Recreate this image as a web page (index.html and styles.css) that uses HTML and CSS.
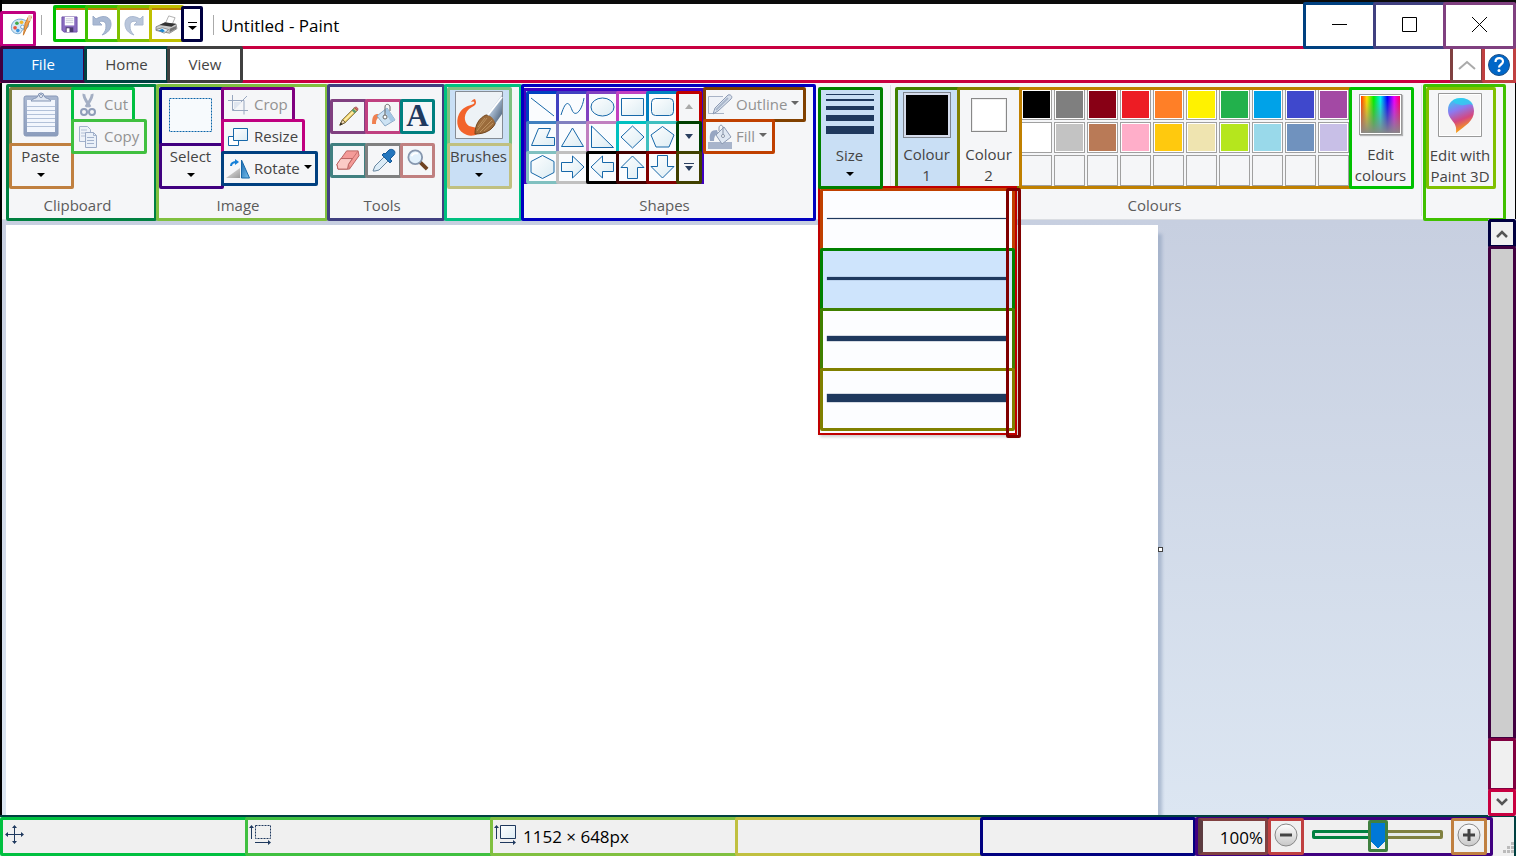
FILE: index.html
```html
<!DOCTYPE html>
<html lang="en-GB">
<head>
<meta charset="utf-8">
<title>Untitled - Paint</title>
<link rel="stylesheet" href="styles.css">
</head>
<body>
<svg class="defs" width="0" height="0" aria-hidden="true">
  <defs>
    <linearGradient id="pale" x1="0" y1="0" x2="1" y2="1"><stop offset="0" stop-color="#fff"/><stop offset="1" stop-color="#dcecf3"/></linearGradient>
    <linearGradient id="board" x1="0" y1="0" x2="0" y2="1"><stop offset="0" stop-color="#a9b7d0"/><stop offset="1" stop-color="#8c9dbd"/></linearGradient>
    <linearGradient id="grey" x1="0" y1="0" x2="1" y2="1"><stop offset="0" stop-color="#eee"/><stop offset="1" stop-color="#999"/></linearGradient>
    <linearGradient id="blue" x1="0" y1="0" x2="1" y2="1"><stop offset="0" stop-color="#1668b0"/><stop offset="1" stop-color="#7cc2ee"/></linearGradient>
    <linearGradient id="steel" x1="0" y1="0" x2="1" y2="1"><stop offset="0" stop-color="#e9f1f8"/><stop offset=".5" stop-color="#9fb2c8"/><stop offset="1" stop-color="#3c5068"/></linearGradient>
    <linearGradient id="drop" x1=".2" y1="0" x2=".5" y2="1"><stop offset="0" stop-color="#2fd0f2"/><stop offset=".35" stop-color="#8b7af0"/><stop offset=".65" stop-color="#d5477f"/><stop offset="1" stop-color="#ffb400"/></linearGradient>
    <linearGradient id="round" x1="0" y1="0" x2="0" y2="1"><stop offset="0" stop-color="#fff"/><stop offset="1" stop-color="#c8c8c8"/></linearGradient>
  </defs>
</svg>

<header class="titlebar">
  <button class="box app-icon" aria-label="Paint">
    <svg width="23" height="22" viewBox="0 0 24 24"><path d="M1 15C0 7 7 3 14 5c7 2 7 8 3 10-3 1-4 0-5 3-1 4-10 3-11-3z" fill="#d3e8f7" stroke="#6ba2cc"/><circle cx="5" cy="14" r="2" fill="#e8583b"/><circle cx="7" cy="9" r="2" fill="#43a94b"/><circle cx="12" cy="8" r="2" fill="#f3b72c"/><circle cx="8" cy="17" r="2" fill="#3b94dc"/><circle cx="13" cy="13" r="2" fill="#fff" stroke="#6ba2cc"/><path d="M20 1l3 1-4 9-5 11 2-13z" fill="#f0a04c" stroke="#c97a2b"/><path d="M19 1l4-1-1 7-3-1z" fill="#e9cdb0"/></svg>
  </button>
  <span class="divider"></span>
  <div class="quick">
    <button class="box q-save" aria-label="Save"><svg width="17" height="17" viewBox="0 0 18 18"><path d="M1 1h16v16H3l-2-2z" fill="#8a6cc0" stroke="#6f52a8"/><path d="M4 1h10v9H4z" fill="#fff"/><path d="M5 3h8M5 5h8M5 7h8" stroke="#c8c8d8"/><path d="M5 12h8v5H5z" fill="#4b3a70"/><path d="M6 13h3v4H6z" fill="#fff"/></svg></button>
    <button class="box q-undo" aria-label="Undo"><svg width="20" height="22" viewBox="0 0 20 22"><path d="M1 2v9h9L7 8c4-2 7 0 7 4s-1 6-4 9c6-2 9-6 9-11C19 3 12 0 4 5z" fill="#a9b9d3" stroke="#9cadc9"/></svg></button>
    <button class="box q-redo" aria-label="Redo"><svg width="20" height="22" viewBox="0 0 20 22"><path d="M19 2v9h-9l3-3c-4-2-7 0-7 4s1 6 4 9c-6-2-9-6-9-11C1 3 8 0 16 5z" fill="#b9c6db" stroke="#a9b8d0"/></svg></button>
    <button class="box q-print" aria-label="Print"><svg width="24" height="20" viewBox="0 0 26 22"><path d="M12 10l4-9 7 2-4 9z" fill="#fff" stroke="#aaa"/><path d="M2 13l9-4 13 1 1 5-8 5-15-3z" fill="#ccc" stroke="#888"/><path d="M6 11l13 2 5-3-12-2z" fill="#333"/><path d="M17 15l7-3v3l-7 4z" fill="#777"/><path d="M2 16l7-2 7 2-5 4z" fill="#e8f4fd" stroke="#888"/><path d="M5 17l4-2 3 3-3 1z" fill="#1c86cf"/></svg></button>
    <button class="box q-more" aria-label="Customise Quick Access Toolbar"><svg width="9" height="8" viewBox="0 0 9 8"><path d="M0 .5h9" stroke="#000"/><path d="M0 4h9L4.500 8z"/></svg></button>
  </div>
  <span class="divider"></span>
  <h1 class="title">Untitled - Paint</h1>
  <div class="window-buttons">
    <button class="box w-min" aria-label="Minimise"><svg width="15" height="15"><path d="M0 7.500h15" stroke="#000"/></svg></button>
    <button class="box w-max" aria-label="Maximise"><svg width="15" height="15"><path d="M.5 .5h14v14H.5z" fill="none" stroke="#000"/></svg></button>
    <button class="box w-close" aria-label="Close"><svg width="15" height="15"><path d="M0 0l15 15M15 0L0 15" stroke="#000"/></svg></button>
  </div>
</header>

<nav class="tabs">
  <button class="box tab tab-file">File</button>
  <button class="box tab tab-home">Home</button>
  <button class="box tab tab-view">View</button>
  <span class="spacer"></span>
  <button class="box t-collapse" aria-label="Minimise the Ribbon"><svg width="18" height="10"><path d="M1 9l8-7 8 7" fill="none" stroke="#aaa" stroke-width="2"/></svg></button>
  <button class="box t-help" aria-label="Help"><svg width="24" height="24" viewBox="0 0 24 24"><circle cx="12" cy="12" r="10.500" fill="#0067c8" stroke="#1d4f86"/><path d="M8.500 9c0-5 7.500-5 7.500-.5 0 3-4 3-4 6" fill="none" stroke="#fff" stroke-width="2.200"/><circle cx="12" cy="17.500" r="1.500" fill="#fff"/></svg></button>
</nav>

<main class="ribbon">
  <section class="box group g-clipboard">
    <div class="content">
      <div class="split">
        <button class="box s-top paste-top" aria-label="Paste"><svg width="36" height="44" viewBox="0 0 36 44"><rect x="1" y="3" width="34" height="40" rx="2" fill="url(#board)" stroke="#8798b7"/><path d="M4 7h28v32H4z" fill="#f2f6fd"/><path d="M4 13.500h28M4 17.500h28M4 21.500h28M4 25.500h28M4 29.500h28M4 33.500h28" stroke="#b2c1d9"/><path d="M8 8c1-3 6-2 7-5a3 3 0 0 1 6 0c1 3 6 2 7 5z" fill="#dfe6f1" stroke="#8294b3"/><circle cx="18" cy="3" r="1.500" fill="#fff" stroke="#8294b3"/></svg></button>
        <button class="box s-bottom paste-bottom">Paste<i class="arrow"></i></button>
      </div>
      <div class="stack">
        <button class="box row cut" disabled><svg width="20" height="24" viewBox="0 0 20 24"><path d="M6 1c-1 3 3 8 6 13M14 1c1 3-3 8-6 13" fill="none" stroke="#a3aec3" stroke-width="3"/><circle cx="6" cy="19" r="3" fill="none" stroke="#8f9db8" stroke-width="2"/><circle cx="14" cy="19" r="3" fill="none" stroke="#8f9db8" stroke-width="2"/></svg>Cut</button>
        <button class="box row copy" disabled><svg width="20" height="24" viewBox="0 0 20 24"><path d="M1.500 1.500h8l3 3v12h-11z" fill="#eef2f8" stroke="#a3b2cc"/><path d="M3 5h6M3 8h7M3 11h7" stroke="#b3c0d6"/><path d="M7.500 7.500h8l3 3v12h-11z" fill="#eaf0f8" stroke="#9baac5"/><path d="M15.500 7.500v3h3M9 12.500h7M9 15.500h7M9 18.500h7" fill="none" stroke="#a3b2cc"/></svg>Copy</button>
      </div>
    </div>
    <h2 class="label">Clipboard</h2>
  </section>

  <section class="box group g-image">
    <div class="content">
      <div class="split">
        <button class="box s-top select-top" aria-label="Select"><svg width="43" height="36"><path d="M.5 1.500h42v33H.5z" fill="#f7fafd" stroke="#0a65a8" stroke-dasharray="2 1"/></svg></button>
        <button class="box s-bottom select-bottom">Select<i class="arrow"></i></button>
      </div>
      <div class="stack">
        <button class="box row crop" disabled><svg width="20" height="20" viewBox="0 0 20 20"><path d="M0 5.500h16v14M4.500 0v15.500H20M5 15L19 1" fill="none" stroke="#98a7bf"/><path d="M6 7h8l-8 8z" fill="#dfe5ef"/></svg>Crop</button>
        <button class="box row resize"><svg width="20" height="18" viewBox="0 0 20 18"><path d="M.5 8.500h10v9H.5z" fill="#fff" stroke="#1768a9"/><path d="M5.500 .5h14v12h-14z" fill="url(#pale)" stroke="#1768a9"/></svg>Resize</button>
        <button class="box row rotate"><svg width="20" height="20" viewBox="2 0 20 20"><path d="M0 19h14V9z" fill="url(#grey)"/><path d="M15.500 1v18h8z" fill="url(#blue)" stroke="#1768a9"/><path d="M5 7c0-3 2-4 6-4" fill="none" stroke="#1580d8" stroke-width="2"/><path d="M9 0l4 3-4 3z" fill="#1580d8"/></svg>Rotate<i class="arrow"></i></button>
      </div>
    </div>
    <h2 class="label">Image</h2>
  </section>

  <section class="box group g-tools">
    <div class="content tools">
      <button class="box t1" aria-label="Pencil"><svg width="22" height="22" viewBox="0 0 24 24"><path d="M2 22l3-6L18 3l3 3L8 19z" fill="#f7d76c" stroke="#6b5b2c"/><path d="M7 17L18 6" stroke="#fff1ae" stroke-width="1.500"/><path d="M2 22l3-6 3 3z" fill="#f3dcc1" stroke="#6b5b2c"/><path d="M2 22l1-3 2 2z" fill="#222"/><path d="M15 6l3 3 2-2-3-3z" fill="#5a9a70"/><path d="M18 3c2-2 5 1 3 3z" fill="#e56b6b" stroke="#9a4a4a"/></svg></button>
      <button class="box t2" aria-label="Fill with colour"><svg width="26" height="26" viewBox="0 0 26 26"><path d="M7 11c-4 0-6 2-6 10h4c0-4 1-6 4-7z" fill="#f08050"/><path d="M6 13l10-8 8 12-10 6z" fill="#cde3f4" stroke="#89a8c4"/><path d="M16 5l8 12-4 2-7-12z" fill="#a3c6e4"/><path d="M14 14V4c0-4 5-3 5 0v4" fill="none" stroke="#666"/><circle cx="14" cy="14" r="2" fill="#fff" stroke="#666"/></svg></button>
      <button class="box t3 text-tool" aria-label="Text">A</button>
      <button class="box t4" aria-label="Eraser"><svg width="25" height="23" viewBox="0 0 26 24"><path d="M1 17L11 3h12l1 5-10 14H2z" fill="#f49b98" stroke="#b8615f"/><path d="M1 17h12L23 3M13 17l1 5" fill="none" stroke="#c8706d"/><path d="M1 17l4-6h12l-4 6-1 5H2z" fill="#fbcac6" stroke="#b8615f"/></svg></button>
      <button class="box t5" aria-label="Colour picker"><svg width="24" height="24" viewBox="0 0 24 24"><path d="M1 23l2-5L12 9l4 4-9 9-4 1z" fill="#dcecf7" stroke="#68869f"/><path d="M10 7l8 8 2-2-2-2 4-4c3-4-2-7-5-5l-4 4-1-1z" fill="#2476bd" stroke="#155a98"/></svg></button>
      <button class="box t6" aria-label="Magnifier"><svg width="22" height="24" viewBox="0 0 24 24"><path d="M14 14l8 8" stroke="#704322" stroke-width="4"/><circle cx="9" cy="9" r="7.500" fill="#e2f1fc" stroke="#8797ae" stroke-width="2"/><path d="M5 8c1-3 4-4 7-3" fill="none" stroke="#fff" stroke-width="2"/></svg></button>
    </div>
    <h2 class="label">Tools</h2>
  </section>

  <section class="box group g-brushes">
    <div class="content">
      <div class="split">
        <button class="box s-top brush-top" aria-label="Brushes"><svg width="48" height="48" viewBox="0 0 48 48"><path d="M.5 .5h47v47H.5z" fill="#edf2f6" stroke="#858c94"/><path d="M20 8c2 4 1 6-3 8C8 21 8 31 14 35l12 3c0 5-8 8-14 6C3 41 0 32 4 23c3-6 8-8 12-9 3-1 4-2 3-3s-2 0-3 0c1-2 3-3 4-3z" fill="#f2632b"/><path d="M20 43c0-9 4-16 11-19 6 0 10 4 9 9-3 6-10 10-20 10z" fill="#9b6b3b" stroke="#70441c"/><path d="M22 40l10-13M25 41l12-12M23 36l7-9M29 40l9-8" stroke="#bd9260"/><path d="M32 24L47 4v19l-7 10c0-4-3-8-8-9z" fill="url(#steel)"/><path d="M33 24L47 6" stroke="#fff" stroke-width="2"/></svg></button>
        <button class="box s-bottom brush-bottom">Brushes<i class="arrow"></i></button>
      </div>
    </div>
  </section>

  <section class="box group g-shapes">
    <div class="content">
      <div class="gallery">
        <button class="box" aria-label="Line"><svg class="shape"><path d="M1 1l23 18"/></svg></button>
        <button class="box" aria-label="Curve"><svg class="shape"><path class="open" d="M1 18C6 2 9 5 12 13S22 14 24 1"/></svg></button>
        <button class="box" aria-label="Oval"><svg class="shape"><ellipse cx="12.500" cy="10" rx="11.500" ry="9"/></svg></button>
        <button class="box" aria-label="Rectangle"><svg class="shape"><path d="M1.500 1.500h22v17h-22z"/></svg></button>
        <button class="box" aria-label="Rounded rectangle"><svg class="shape"><rect x="1.500" y="1.500" width="22" height="17" rx="4"/></svg></button>
        <button class="box" aria-label="Scroll up" disabled><svg width="8" height="5"><path d="M0 5h8L4 0z" fill="#aaa"/></svg></button>
        <button class="box" aria-label="Polygon"><svg class="shape"><path d="M1.500 18.500l7-17h12l-4 9h8v8z"/></svg></button>
        <button class="box" aria-label="Triangle"><svg class="shape"><path d="M1.500 19.500L12.500 1l11 18.500z"/></svg></button>
        <button class="box" aria-label="Right triangle"><svg class="shape"><path d="M1.500 20.500V-1l22 21.500z"/></svg></button>
        <button class="box" aria-label="Diamond"><svg class="shape"><path d="M12.500-1L24 10 12.500 21 1 10z"/></svg></button>
        <button class="box" aria-label="Pentagon"><svg class="shape"><path d="M12.500-.5L24 8l-5 12H6L1 8z"/></svg></button>
        <button class="box" aria-label="Scroll down"><svg width="8" height="5"><path d="M0 0h8L4 5z" fill="#2a3f5f"/></svg></button>
        <button class="box" aria-label="Hexagon"><svg class="shape"><path d="M12.500-1.500L24 4.500v11l-11.500 6L1 15.500v-11z"/></svg></button>
        <button class="box" aria-label="Right arrow"><svg class="shape"><path d="M1.500 5.500h11V-1L24 10 12.500 21v-6.500h-11z"/></svg></button>
        <button class="box" aria-label="Left arrow"><svg class="shape"><path d="M23.500 5.500h-11V-1L1 10l11.500 11v-6.500h11z"/></svg></button>
        <button class="box" aria-label="Up arrow"><svg class="shape"><path d="M7.500 21.500v-11H1L12.500-1 24 10.500h-6.500v11z"/></svg></button>
        <button class="box" aria-label="Down arrow"><svg class="shape"><path d="M7.500-1.500v11H1L12.500 21 24 9.500h-6.500v-11z"/></svg></button>
        <button class="box" aria-label="More shapes"><svg width="10" height="8"><path d="M0 .5h10" stroke="#2a3f5f"/><path d="M1 3h8L5 8z" fill="#2a3f5f"/></svg></button>
      </div>
      <div class="stack">
        <button class="box row outline" disabled><svg width="20" height="22" viewBox="2 0 20 22"><path d="M15 2.500H.5v17H16" fill="#f0f3f8" stroke="#a8b3c6"/><path d="M5 20l2-6L20 1c3-1 5 2 3 4L10 17z" fill="#d8e0ec" stroke="#8c9ab3"/><path d="M8 16L20 4" stroke="#a9b6cb" stroke-width="2"/></svg>Outline<i class="arrow"></i></button>
        <button class="box row fill" disabled><svg width="20" height="24" viewBox="2 0 20 24"><path d="M0 17h24v7H0z" fill="#a8b4cb"/><path d="M9 5C3 5 1 8 2 16h4c0-4 1-6 4-8z" fill="#97a6c2"/><path d="M8 10l8-8 7 10-9 7z" fill="#dfe7f2" stroke="#8c9ab3"/><path d="M15 10V2c-1-3-4-2-4 1v3" fill="none" stroke="#8793a8"/><circle cx="15" cy="11" r="1.500" fill="#fff" stroke="#8793a8"/></svg>Fill<i class="arrow"></i></button>
      </div>
    </div>
    <h2 class="label">Shapes</h2>
  </section>

  <section class="size-group">
    <button class="box tall size" aria-expanded="true"><svg width="48" height="44"><path d="M0 4h48v1H0zM0 9h48v2H0zM0 16h48v4H0zM0 25h48v6H0zM0 36h48v8H0z" fill="#1f395e"/></svg><span>Size</span><i class="arrow"></i></button>
    <div class="menu">
      <button class="box m1" aria-label="1px"><span class="stroke"></span></button>
      <button class="box m2" aria-label="3px"><span class="stroke"></span></button>
      <button class="box m3" aria-label="5px"><span class="stroke"></span></button>
      <button class="box m4" aria-label="8px"><span class="stroke"></span></button>
      <div class="box menu-scroll"></div>
    </div>
  </section>
  <span class="rule short"></span>
  <section class="g-colours">
    <div class="content">
      <button class="box tall colour1"><span class="chip"></span><span>Colour<br>1</span></button>
      <button class="box tall colour2"><span class="chip"></span><span>Colour<br>2</span></button>
      <div class="box palette"><div class="swatches">
        <button aria-label="Black"></button><button aria-label="Grey-50%"></button><button aria-label="Dark red"></button><button aria-label="Red"></button><button aria-label="Orange"></button><button aria-label="Yellow"></button><button aria-label="Green"></button><button aria-label="Turquoise"></button><button aria-label="Indigo"></button><button aria-label="Purple"></button>
        <button aria-label="White"></button><button aria-label="Grey-25%"></button><button aria-label="Brown"></button><button aria-label="Rose"></button><button aria-label="Gold"></button><button aria-label="Light yellow"></button><button aria-label="Lime"></button><button aria-label="Light turquoise"></button><button aria-label="Blue-grey"></button><button aria-label="Lavender"></button>
        <button class="empty" aria-label="Custom 1"></button><button class="empty" aria-label="Custom 2"></button><button class="empty" aria-label="Custom 3"></button><button class="empty" aria-label="Custom 4"></button><button class="empty" aria-label="Custom 5"></button><button class="empty" aria-label="Custom 6"></button><button class="empty" aria-label="Custom 7"></button><button class="empty" aria-label="Custom 8"></button><button class="empty" aria-label="Custom 9"></button><button class="empty" aria-label="Custom 10"></button>
      </div></div>
      <button class="box tall edit-colours"><span class="spectrum"></span><span>Edit<br>colours</span></button>
    </div>
    <h2 class="label">Colours</h2>
  </section>
  <span class="rule"></span>
  <section class="box group g-3d">
    <button class="box tall paint3d"><svg width="44" height="44" viewBox="0 0 44 44"><path d="M.5 .5h43v43H.5z" fill="#f5f5f5" stroke="#999"/><path d="M1.500 1.500h41v41h-41z" fill="none" stroke="#fff"/><path d="M18 40c2-12-8-12-8-23C10 9 16 5 23 5s13 5 13 13c0 10-9 15-18 22z" fill="url(#drop)"/><path d="M15 7c6-4 18-2 20 5-5-2-8 1-12 0s-7-1-8-5z" fill="#26d6f0" opacity=".7"/></svg><span>Edit with<br>Paint 3D</span></button>
  </section>
</main>

<div class="workspace">
  <div class="sheet"></div>
  <div class="handle-column"><span class="handle"></span></div>
  <div class="scrollbar">
    <button class="box sb-up" aria-label="Scroll up"><svg width="12" height="9"><path d="M1 8l5-5 5 5" fill="none" stroke="#555" stroke-width="2.500"/></svg></button>
    <div class="box sb-thumb"></div>
    <div class="box sb-track"></div>
    <button class="box sb-down" aria-label="Scroll down"><svg width="12" height="9"><path d="M1 1l5 5 5-5" fill="none" stroke="#555" stroke-width="2.500"/></svg></button>
  </div>
</div>

<footer class="status">
  <div class="box cell c1"><svg width="20" height="20" viewBox="0 0 20 20"><path d="M9.500 2v16M2 9.500h16" stroke="#1f395e"/><path d="M7 3l2.500-3L12 3zM7 16l2.500 3 2.500-3zM3 7L0 9.500 3 12zM16 7l3 2.500-3 2.500z" fill="#1f395e"/></svg></div>
  <div class="box cell c2"><svg width="24" height="20" viewBox="0 0 24 20"><path d="M3.500 2v12M7 17.500h14" stroke="#1f395e"/><path d="M1 3l2.500-3L6 3zM20 15l3 2.500-3 2.500z" fill="#1f395e"/><path d="M7.500 .5h15v13h-15z" fill="none" stroke="#1f395e" stroke-dasharray="2 1"/></svg></div>
  <div class="box cell c3"><svg width="24" height="20" viewBox="0 0 24 20"><path d="M3.500 2v12M7 17.500h14" stroke="#1f395e"/><path d="M1 3l2.500-3L6 3zM20 15l3 2.500-3 2.500z" fill="#1f395e"/><path d="M7.500 .5h15v13h-15z" fill="url(#pale)" stroke="#1f395e"/></svg><span>1152 × 648px</span></div>
  <div class="box cell c4"></div>
  <div class="box cell c5"></div>
  <div class="box zoom">
    <label class="box percent" for="zoom">100%</label>
    <button class="box z-out" aria-label="Zoom out"><svg width="24" height="24"><circle cx="12" cy="12" r="11" fill="url(#round)" stroke="#888"/><path d="M6 12h12" stroke="#444" stroke-width="3"/></svg></button>
    <input type="range" id="zoom" class="slider" min="0" max="100" value="50">
    <button class="box z-in" aria-label="Zoom in"><svg width="24" height="24"><circle cx="12" cy="12" r="11" fill="url(#round)" stroke="#888"/><path d="M6 12h12M12 6v12" stroke="#444" stroke-width="3"/></svg></button>
  </div>
  <svg class="grip" width="11" height="11"><path d="M8 0h3v3H8zM4 4h3v3H4zM8 4h3v3H8zM0 8h3v3H0zM4 8h3v3H4zM8 8h3v3H8z" fill="#bbb"/></svg>
</footer>
</body>
</html>
```
FILE: styles.css
```css
* { box-sizing: border-box; }
body {
  margin: 0;
  height: 100vh;
  display: flex;
  flex-direction: column;
  overflow: hidden;
  background: #000;
  font: 15px/21px "Open Sans", "Noto Sans", sans-serif;
  color: #444;
}
button { font: inherit; color: inherit; background: none; margin: 0; padding: 0; }
svg { display: block; flex: none; overflow: visible; }
h1, h2 { margin: 0; font-weight: 400; }
.defs { position: absolute; }
.box { border: 3px solid; border-radius: 2px; }
button.box { display: flex; align-items: center; justify-content: center; flex: none; }
.spacer { flex: 1; }
.arrow { border: 4px solid transparent; border-top-color: #000; border-bottom: 0; }

/* Title bar */
.titlebar {
  height: 46px;
  border-top: 4px solid #0b0b0b;
  margin-left: 2px;
  background: #fff;
  display: flex;
  align-items: center;
  flex: none;
}
.app-icon { width: 36px; height: 36px; margin: 8px 5px 0 -2px; border-color: #c0007f; }
button.app-icon { padding: 0 0 7px 7px; }
.divider { width: 1px; height: 20px; background: #aaa; }
.quick { display: flex; align-items: center; margin: 0 10px 4px 11px; }
.quick .box { width: 35px; height: 37px; margin-right: -3px; padding: 3px 2px 0 0; }
.q-save { border-color: #00c000; }
.q-undo { border-color: #40c000; }
.q-redo { border-color: #80c000; }
.q-print { border-color: #c0c000; }
.q-save, .q-undo, .q-redo, .q-print { box-shadow: inset 0 2px #c08000; }
.quick .q-more { width: 22px; height: 36px; margin: 2px 0 0; padding-right: 0; border-color: #000040; }
.title { font-size: 17px; line-height: 24px; color: #000; margin: 2px 0 0 7px; flex: 1; }
.window-buttons { display: flex; align-self: flex-start; margin-top: -2px; position: relative; z-index: 1; }
.window-buttons .box { width: 73px; height: 47px; margin-left: -3px; padding-bottom: 2px; background: #fff; }
.window-buttons .w-min { border-color: #004080; }
.w-max { border-color: #404080; }
.w-close { border-color: #804080; }

/* Tabs */
.tabs {
  height: 37px;
  flex: none;
  display: flex;
  background: #fff;
  border: solid #c80040;
  border-width: 3px 0;
}
.tabs .box { height: 37px; margin: -3px -2px 0 0; }
.tab-file { width: 86px; border-color: #400040; background: #1979ca; color: #fff; }
.tab-home { width: 85px; border-color: #004040; background: #f5f6f8; }
.tab-view { width: 76px; border-color: #404040; background: #fff; }
.t-collapse { width: 34px; border-color: #804040; background: #fff; }
.tabs .t-help { width: 34px; border-color: #c04040; background: #fff; margin-right: 0; }

/* Ribbon */
.ribbon {
  height: 137px;
  flex: none;
  display: flex;
  align-items: flex-start;
  margin: 0 1px 0 2px;
  padding: 1px 0 0 4px;
  background: #f5f6f8;
  border-bottom: 1px solid #dadde2;
  position: relative;
  z-index: 1;
}
.group { height: 137px; margin-right: -1px; flex: none; }
.content { display: flex; height: 102px; align-items: flex-start; }
.label { font-size: 15px; line-height: 32px; height: 29px; padding-right: 8px; text-align: center; color: #5c5c5c; }
.g-clipboard { width: 151px; border-color: #008040; }
.g-image { width: 172px; border-color: #80c040; }
.g-tools { width: 118px; border-color: #404080; }
.g-brushes { width: 78px; border-color: #00c080; }
.g-shapes { width: 295px; border-color: #0000c0; }
.split { width: 65px; display: flex; flex-direction: column; flex: none; }
.split .box { padding-right: 2px; }
.split .s-top { height: 59px; padding-bottom: 3px; }
.split .s-bottom { height: 46px; margin-top: -3px; flex-direction: column; justify-content: flex-start; }
.s-bottom .arrow { margin-top: 6px; }
.paste-top { border-color: #808040; }
.paste-bottom { border-color: #c08040; }
.select-top { border-color: #000080; }
.select-bottom { border-color: #400080; }
.brush-top { border-color: #80c080; background: #c9dff5; }
.brush-bottom { border-color: #c0c080; background: #c9dff5; }
.stack { display: flex; flex-direction: column; align-items: flex-start; margin-left: -3px; }
.stack .row { height: 35px; margin-bottom: -3px; padding: 0 4px; gap: 6px; justify-content: flex-start; }
.row .arrow { margin: -3px 0 0 -2px; }
.row:disabled { color: #929292; }
.row:disabled .arrow { border-top-color: #666; }
.cut { width: 64px; border-color: #00c040; }
.copy { width: 76px; border-color: #40c040; }
.crop { width: 74px; border-color: #800080; }
.resize { width: 84px; border-color: #c00080; }
.rotate { width: 97px; border-color: #004080; }
.outline { width: 103px; border-color: #804000; }
.fill { width: 72px; border-color: #c04000; }

.tools { display: grid; grid-template-columns: repeat(3, 35px); grid-template-rows: 35px 35px; row-gap: 9px; padding-top: 12px; }
.tools .box { width: 37px; height: 35px; padding-bottom: 2px; }
.tools .t1 { border-color: #804080; }
.tools .t2 { border-color: #c04080; }
.tools .t3 { border-color: #008080; }
.tools .t4 { border-color: #408080; }
.tools .t5 { border-color: #808080; }
.tools .t6 { border-color: #c08080; }
.tools .box:nth-child(3n) { width: 35px; }
.text-tool { font: bold 31px/31px "Liberation Serif", serif; color: #1f395e; }

.gallery {
  display: grid;
  grid-template-columns: repeat(5, 30px) 25px;
  grid-template-rows: repeat(3, 30px);
  margin-top: 1px;
  border: solid #4000c0;
  border-width: 3px 3px 3px 2px;
}
.gallery + .stack { margin-left: -1px; }
.gallery .box { width: 33px; height: 33px; padding-bottom: 2px; background: #fafcfe; }
.gallery .box:nth-child(6n) { width: 26px; background: #f5f6f8; }
.shape { width: 25px; height: 20px; fill: url(#pale); stroke: #1768a9; stroke-width: 1; }
.shape .open { fill: none; }
.gallery .box:nth-child(1) { border-color: #0040c0; }
.gallery .box:nth-child(2) { border-color: #4040c0; }
.gallery .box:nth-child(3) { border-color: #8040c0; }
.gallery .box:nth-child(4) { border-color: #c040c0; }
.gallery .box:nth-child(5) { border-color: #0080c0; }
.gallery .box:nth-child(6) { border-color: #c00000; }
.gallery .box:nth-child(7) { border-color: #4080c0; }
.gallery .box:nth-child(8) { border-color: #8080c0; }
.gallery .box:nth-child(9) { border-color: #c080c0; }
.gallery .box:nth-child(10) { border-color: #00c0c0; }
.gallery .box:nth-child(11) { border-color: #40c0c0; }
.gallery .box:nth-child(12) { border-color: #004000; }
.gallery .box:nth-child(13) { border-color: #80c0c0; }
.gallery .box:nth-child(14) { border-color: #c0c0c0; }
.gallery .box:nth-child(15) { border-color: #000; }
.gallery .box:nth-child(16) { border-color: #400000; }
.gallery .box:nth-child(17) { border-color: #800000; }
.gallery .box:nth-child(18) { border-color: #404000; }

/* Size and its menu */
.size-group { position: relative; margin: 3px 0 0 3px; }
.tall { width: 65px; height: 102px; }
button.tall { flex-direction: column; justify-content: flex-start; padding-right: 2px; }
.size { border-color: #008000; background: #c9dff5; position: relative; z-index: 1; }
.size span { margin-top: 11px; }
.size .arrow { margin-top: 6px; }
.menu {
  position: absolute;
  top: 99px;
  left: 0;
  width: 199px;
  height: 249px;
  border: 2px solid #c00000;
  background: #fcfdff;
  box-shadow: 2px 2px 3px #0003;
}
.menu button { width: 195px; height: 63px; margin-bottom: -3px; justify-content: flex-start; padding: 0 0 3px 4px; }
.menu .m1 { border-color: #c04000; }
.menu .m2 { border-color: #008000; background: #cee4fc; }
.menu .m3 { border-color: #408000; }
.menu .m4 { border-color: #808000; }
.stroke { width: 179px; height: 1px; background: #1f395e; box-shadow: 0 0 1px #1f395e; }
.m2 .stroke { height: 3px; }
.m3 .stroke { height: 5px; }
.m4 .stroke { height: 8px; }
.menu-scroll { position: absolute; top: 0; right: -6px; width: 15px; height: 250px; border-color: #800000; }

/* Colours */
.rule { width: 1px; height: 131px; margin: 1px 1px 0 7px; background: #dfe1e5; }
.rule.short { height: 101px; margin-right: 4px; }
.g-colours { padding-top: 3px; }
.g-colours .label { padding-right: 0; }
.colour1 { border-color: #408000; background: #c9dff5; }
.colour2 { width: 65px; margin-left: -3px; border-color: #808000; background: #f5f6f8; }
.chip { border: 1px solid #888; }
.colour1 .chip { width: 48px; height: 48px; margin: 2px 0 6px; border-color: #7e858e; background: #000; box-shadow: inset 0 0 0 2px #d5dcec; }
.colour2 .chip { width: 36px; height: 36px; margin: 8px 0 12px; background: #fff; box-shadow: inset 0 0 0 1px #eee; }
.palette { width: 333px; height: 102px; margin-left: -3px; border-color: #c08000; overflow: hidden; flex: none; }
.swatches { display: grid; grid-template-columns: repeat(10, 31px); grid-auto-rows: 31px; gap: 2px; margin: -1px; }
.swatches button { border: 1px solid #a0a0a0; box-shadow: inset 0 0 0 1px #fff; }
.swatches .empty { box-shadow: none; }
.swatches :nth-child(1) { background: #000; }
.swatches :nth-child(2) { background: #7f7f7f; }
.swatches :nth-child(3) { background: #880015; }
.swatches :nth-child(4) { background: #ed1c24; }
.swatches :nth-child(5) { background: #ff7f27; }
.swatches :nth-child(6) { background: #fff200; }
.swatches :nth-child(7) { background: #22b14c; }
.swatches :nth-child(8) { background: #00a2e8; }
.swatches :nth-child(9) { background: #3f48cc; }
.swatches :nth-child(10) { background: #a349a4; }
.swatches :nth-child(11) { background: #fff; }
.swatches :nth-child(12) { background: #c3c3c3; }
.swatches :nth-child(13) { background: #b97a57; }
.swatches :nth-child(14) { background: #ffaec9; }
.swatches :nth-child(15) { background: #ffc90e; }
.swatches :nth-child(16) { background: #efe4b0; }
.swatches :nth-child(17) { background: #b5e61d; }
.swatches :nth-child(18) { background: #99d9ea; }
.swatches :nth-child(19) { background: #7092be; }
.swatches :nth-child(20) { background: #c8bfe7; }
.edit-colours { margin-left: -3px; border-color: #00c000; }
.spectrum {
  width: 43px;
  height: 43px;
  margin: 4px 0 9px;
  border: 1px solid #999;
  box-shadow: inset 0 0 0 1px #fff, 1px 1px 1px #0004;
  background:
    linear-gradient(#8880 10%, #888 100%),
    linear-gradient(to right, #f20, #fd0, #0e0, #0ee, #00f, #e0f, #f04);
}
.g-3d { width: 83px; border-color: #40c000; }
.paint3d { width: 70px; border-color: #80c000; }
.paint3d svg { margin: 3px 0 8px; }

/* Canvas */
.workspace {
  flex: 1;
  min-height: 0;
  display: flex;
  margin: 0 0 0 2px;
  padding-left: 4px;
  background: linear-gradient(#c7cfe0, #dce6f2);
}
.sheet { width: 1152px; margin-top: 5px; background: #fff; box-shadow: 4px 9px 3px #8fa0bd99; }
.handle-column { flex: 1; display: flex; align-items: center; padding-top: 63px; }
.handle { width: 5px; height: 5px; border: 1px solid #444; background: #fff; position: relative; }
.scrollbar { width: 28px; margin: -1px 0; display: flex; flex-direction: column; background: #f0f0f0; position: relative; z-index: 2; }
.scrollbar .box { margin-bottom: -2px; }
.sb-up { height: 29px; border-color: #000040; }
.sb-thumb { flex: 494 1 494px; border-color: #400040; background: #cdcdcd; }
.sb-track { flex: 53 1 53px; border-color: #800040; }
.scrollbar .sb-down { height: 27px; border-color: #c80040; margin-bottom: 0; }

/* Status bar */
.status {
  flex: none;
  height: 41px;
  display: flex;
  background: #f0f0f0;
  border: solid #004040;
  border-width: 2px 2px 0 0;
  position: relative;
}
.cell { flex: 248 1 248px; margin-right: -3px; display: flex; align-items: center; padding: 0 3px 4px 2px; font-size: 17px; color: #000; }
.cell span { margin: 4px 0 0 6px; }
.c1 { border-color: #00c040; }
.c2 { border-color: #40c040; padding-left: 0; }
.c3 { border-color: #80c040; padding-left: 0; }
.c4 { border-color: #c0c040; }
.c5 { flex: 216 1 216px; margin-right: -1px; border-color: #000080; }
.zoom { width: 298px; margin-right: 21px; border-color: #400080; display: flex; align-items: center; flex: none; }
.zoom .box { height: 37px; }
.percent { width: 70px; padding-right: 2px; border-color: #804040; border-left: 5px solid #5c3c40; font-size: 17px; line-height: 33px; text-align: right; color: #000; }
.z-out { width: 36px; border-color: #c04040; padding-bottom: 4px; }
.z-in { width: 36px; border-color: #c08040; padding-bottom: 4px; }
.slider { appearance: none; width: 131px; height: 33px; margin: 0 8px 4px; background: none; }
.slider::-webkit-slider-runnable-track {
  height: 9px;
  padding: 3px;
  border-radius: 2px;
  background: linear-gradient(#e7eaea 0 0) content-box, linear-gradient(to right, #008040 50%, #808040 50%);
}
.slider::-webkit-slider-thumb {
  appearance: none;
  width: 20px;
  height: 32px;
  margin-top: -13px;
  border: 3px solid #408040;
  border-radius: 2px;
  background:
    linear-gradient(45deg, #f0f0f0 5px, transparent 5px),
    linear-gradient(-45deg, #f0f0f0 5px, transparent 5px),
    #0078d7;
}
.grip { position: absolute; right: 0; bottom: 3px; }
```
